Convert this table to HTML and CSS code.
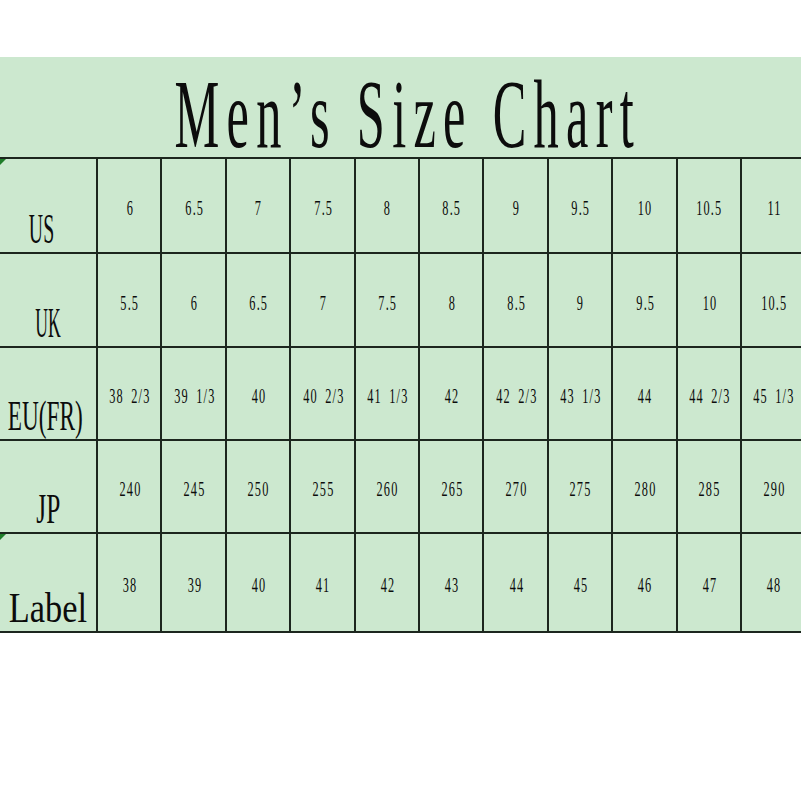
FILE: index.html
```html
<!DOCTYPE html>
<html>
<head>
<meta charset="utf-8">
<link rel="stylesheet" href="styles.css">
</head>
<body>
<div class="sheet">
  <div class="title"><span>Men’s Size Chart</span></div>
  <div class="grid">
    <div class="lab mark"><span class="s-us">US</span></div>
    <div class="num"><span>6</span></div>
    <div class="num"><span>6.5</span></div>
    <div class="num"><span>7</span></div>
    <div class="num"><span>7.5</span></div>
    <div class="num"><span>8</span></div>
    <div class="num"><span>8.5</span></div>
    <div class="num"><span>9</span></div>
    <div class="num"><span>9.5</span></div>
    <div class="num"><span>10</span></div>
    <div class="num"><span>10.5</span></div>
    <div class="num"><span>11</span></div>

    <div class="lab"><span class="s-uk">UK</span></div>
    <div class="num"><span>5.5</span></div>
    <div class="num"><span>6</span></div>
    <div class="num"><span>6.5</span></div>
    <div class="num"><span>7</span></div>
    <div class="num"><span>7.5</span></div>
    <div class="num"><span>8</span></div>
    <div class="num"><span>8.5</span></div>
    <div class="num"><span>9</span></div>
    <div class="num"><span>9.5</span></div>
    <div class="num"><span>10</span></div>
    <div class="num"><span>10.5</span></div>

    <div class="lab"><span class="s-eu">EU(FR)</span></div>
    <div class="num"><span>38 2/3</span></div>
    <div class="num"><span>39 1/3</span></div>
    <div class="num"><span>40</span></div>
    <div class="num"><span>40 2/3</span></div>
    <div class="num"><span>41 1/3</span></div>
    <div class="num"><span>42</span></div>
    <div class="num"><span>42 2/3</span></div>
    <div class="num"><span>43 1/3</span></div>
    <div class="num"><span>44</span></div>
    <div class="num"><span>44 2/3</span></div>
    <div class="num"><span>45 1/3</span></div>

    <div class="lab"><span class="s-jp">JP</span></div>
    <div class="num"><span>240</span></div>
    <div class="num"><span>245</span></div>
    <div class="num"><span>250</span></div>
    <div class="num"><span>255</span></div>
    <div class="num"><span>260</span></div>
    <div class="num"><span>265</span></div>
    <div class="num"><span>270</span></div>
    <div class="num"><span>275</span></div>
    <div class="num"><span>280</span></div>
    <div class="num"><span>285</span></div>
    <div class="num"><span>290</span></div>

    <div class="lab mark"><span class="s-label">Label</span></div>
    <div class="num"><span>38</span></div>
    <div class="num"><span>39</span></div>
    <div class="num"><span>40</span></div>
    <div class="num"><span>41</span></div>
    <div class="num"><span>42</span></div>
    <div class="num"><span>43</span></div>
    <div class="num"><span>44</span></div>
    <div class="num"><span>45</span></div>
    <div class="num"><span>46</span></div>
    <div class="num"><span>47</span></div>
    <div class="num"><span>48</span></div>
  </div>
</div>
</body>
</html>
```
FILE: styles.css
```css
html, body {
  margin: 0;
  padding: 0;
  background: #ffffff;
}
body {
  font-family: "Liberation Serif", "Times New Roman", serif;
  color: #0c0c0c;
}
.sheet {
  margin-top: 57px;
  width: 801px;
  overflow: hidden;
}
.title {
  height: 100px;
  background: #cce8cf;
  display: flex;
  justify-content: center;
  align-items: flex-end;
}
.title span {
  display: inline-block;
  font-size: 97px;
  line-height: 0.88;
  letter-spacing: 14px;
  margin-left: 14px;
  transform: scaleX(0.52);
  white-space: nowrap;
}
.grid {
  display: grid;
  width: max-content;
  grid-template-columns: 96px repeat(11, 62.4px);
  grid-template-rows: 93px 92px 91px 91px 97px;
  column-gap: 2px;
  row-gap: 2px;
  padding: 2px 0;
  background: #1c261e;
}
.grid > div {
  background: #cce8cf;
  display: flex;
  justify-content: center;
  position: relative;
}
.num {
  align-items: center;
  padding-top: 5px;
  box-sizing: border-box;
}
.num span {
  display: inline-block;
  font-size: 22px;
  line-height: 1;
  letter-spacing: 2px;
  word-spacing: 6px;
  margin-left: 2px;
  transform: scaleX(0.56);
  white-space: nowrap;
}
.lab {
  align-items: flex-end;
  padding-bottom: 2px;
  box-sizing: border-box;
}
.lab span {
  display: inline-block;
  font-size: 43px;
  line-height: 1;
  white-space: nowrap;
}
.s-us { transform: scaleX(0.46); margin-right: 13px; }
.s-uk { transform: scaleX(0.41); }
.s-eu { transform: scaleX(0.54); margin-right: 5px; }
.s-jp { transform: scaleX(0.59); }
.s-label { transform: scaleX(0.8); }
.mark::before {
  content: "";
  position: absolute;
  left: 0;
  top: 0;
  border-top: 6px solid #1f7d2a;
  border-right: 6px solid transparent;
}
```
